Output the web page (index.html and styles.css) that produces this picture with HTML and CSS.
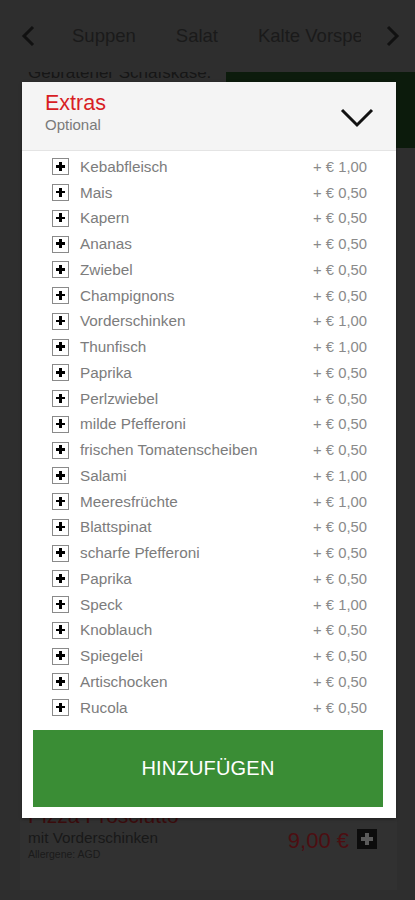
FILE: index.html
```html
<!DOCTYPE html>
<html lang="de">
<head>
<meta charset="utf-8">
<title>Extras</title>
<link rel="stylesheet" href="styles.css">
</head>
<body>
<div class="screen">
  <div class="nav">
    <svg class="arrow" width="16" height="22" viewBox="0 0 16 22"><path d="M13 2 L4 11 L13 20" fill="none" stroke="#111" stroke-width="3"/></svg>
    <div class="tabs">
      <span class="tab">Suppen</span>
      <span class="tab">Salat</span>
      <span class="tab">Kalte Vorspeisen</span>
    </div>
    <svg class="arrow arrow-r" width="16" height="22" viewBox="0 0 16 22"><path d="M3 2 L12 11 L3 20" fill="none" stroke="#111" stroke-width="3"/></svg>
  </div>
  <div class="hero">
    <div class="hero-text">Gebratener Schafskäse.</div>
    <div class="hero-img"></div>
  </div>
  <div class="spacer"></div>
  <div class="product">
    <div class="p-title">Pizza Prosciutto</div>
    <div class="p-row">
      <div class="p-info">
        <div class="p-desc">mit Vorderschinken</div>
        <div class="p-all">Allergene: AGD</div>
      </div>
      <div class="p-price">9,00 €</div>
      <svg class="p-add" width="20" height="20" viewBox="0 0 20 20"><rect width="20" height="20" fill="#0c0c0c"/><path d="M10 4 V16 M4 10 H16" stroke="#5a5a5a" stroke-width="4"/></svg>
    </div>
  </div>

  <div class="modal">
    <div class="m-head">
      <div class="m-titles">
        <div class="m-title">Extras</div>
        <div class="m-sub">Optional</div>
      </div>
      <svg class="m-chev" width="34" height="22" viewBox="0 0 34 22"><path d="M2 3 L17 18 L32 3" fill="none" stroke="#111" stroke-width="3"/></svg>
    </div>
    <div class="m-list">
      <div class="row"><span class="cb"></span><span class="name">Kebabfleisch</span><span class="price">+ € 1,00</span></div>
      <div class="row"><span class="cb"></span><span class="name">Mais</span><span class="price">+ € 0,50</span></div>
      <div class="row"><span class="cb"></span><span class="name">Kapern</span><span class="price">+ € 0,50</span></div>
      <div class="row"><span class="cb"></span><span class="name">Ananas</span><span class="price">+ € 0,50</span></div>
      <div class="row"><span class="cb"></span><span class="name">Zwiebel</span><span class="price">+ € 0,50</span></div>
      <div class="row"><span class="cb"></span><span class="name">Champignons</span><span class="price">+ € 0,50</span></div>
      <div class="row"><span class="cb"></span><span class="name">Vorderschinken</span><span class="price">+ € 1,00</span></div>
      <div class="row"><span class="cb"></span><span class="name">Thunfisch</span><span class="price">+ € 1,00</span></div>
      <div class="row"><span class="cb"></span><span class="name">Paprika</span><span class="price">+ € 0,50</span></div>
      <div class="row"><span class="cb"></span><span class="name">Perlzwiebel</span><span class="price">+ € 0,50</span></div>
      <div class="row"><span class="cb"></span><span class="name">milde Pfefferoni</span><span class="price">+ € 0,50</span></div>
      <div class="row"><span class="cb"></span><span class="name">frischen Tomatenscheiben</span><span class="price">+ € 0,50</span></div>
      <div class="row"><span class="cb"></span><span class="name">Salami</span><span class="price">+ € 1,00</span></div>
      <div class="row"><span class="cb"></span><span class="name">Meeresfrüchte</span><span class="price">+ € 1,00</span></div>
      <div class="row"><span class="cb"></span><span class="name">Blattspinat</span><span class="price">+ € 0,50</span></div>
      <div class="row"><span class="cb"></span><span class="name">scharfe Pfefferoni</span><span class="price">+ € 0,50</span></div>
      <div class="row"><span class="cb"></span><span class="name">Paprika</span><span class="price">+ € 0,50</span></div>
      <div class="row"><span class="cb"></span><span class="name">Speck</span><span class="price">+ € 1,00</span></div>
      <div class="row"><span class="cb"></span><span class="name">Knoblauch</span><span class="price">+ € 0,50</span></div>
      <div class="row"><span class="cb"></span><span class="name">Spiegelei</span><span class="price">+ € 0,50</span></div>
      <div class="row"><span class="cb"></span><span class="name">Artischocken</span><span class="price">+ € 0,50</span></div>
      <div class="row"><span class="cb"></span><span class="name">Rucola</span><span class="price">+ € 0,50</span></div>
    </div>
    <button class="m-btn">HINZUFÜGEN</button>
  </div>
</div>
</body>
</html>
```
FILE: styles.css
```css
* { box-sizing: border-box; }
html, body { margin: 0; padding: 0; }
body {
  font-family: "Liberation Sans", Arial, sans-serif;
  background: #2e2e2e;
}
.screen {
  position: relative;
  width: 415px;
  height: 900px;
  overflow: hidden;
  background: #2e2e2e;
  display: flex;
  flex-direction: column;
}
.nav {
  height: 72px;
  display: flex;
  align-items: center;
  padding-left: 20px;
  flex: 0 0 72px;
}
.arrow { flex: 0 0 16px; margin-top: -1px; }
.arrow-r { margin-left: 24px; }
.tabs {
  margin-left: 36px;
  width: 289px;
  overflow: hidden;
  white-space: nowrap;
  display: flex;
  gap: 40px;
  font-size: 18.5px;
  color: #1a1a1a;
}
.tab { flex: 0 0 auto; }
.hero {
  display: flex;
  height: 76px;
  flex: 0 0 76px;
  overflow: hidden;
}
.hero-text {
  flex: 0 0 226px;
  padding-left: 28px;
  font-size: 17px;
  line-height: 20px;
  color: #161616;
  margin-top: -9px;
}
.hero-img { flex: 1; background: #0c1b0c; }
.spacer { flex: 1; }
.product {
  margin: 0 18px 10px 20px;
  height: 100px;
  background: #313131;
  padding: 14px 20px 0 8px;
}
.p-title {
  font-size: 21px;
  line-height: 24px;
  color: #3b0c0d;
}
.p-row {
  display: flex;
  align-items: center;
  margin-top: 1px;
}
.p-info { flex: 1; }
.p-desc { font-size: 15.3px; line-height: 18px; color: #181818; }
.p-all { font-size: 10.5px; line-height: 14px; color: #1a1a1a; }
.p-price {
  font-size: 22px;
  color: #4c0e11;
  margin-right: 8px;
  margin-top: -8px;
}
.p-add { margin-top: -12px; }

.modal {
  position: absolute;
  top: 82px;
  left: 22px;
  width: 374px;
  height: 736px;
  background: #fff;
  box-shadow: 0 1px 3px rgba(0,0,0,0.4);
  display: flex;
  flex-direction: column;
}
.m-head {
  height: 69px;
  background: #f4f4f4;
  border-bottom: 1px solid #e4e4e4;
  display: flex;
  align-items: flex-start;
  justify-content: space-between;
  padding: 9px 22px 0 23px;
}
.m-title {
  font-size: 21.5px;
  line-height: 25px;
  color: #d81e25;
}
.m-sub {
  font-size: 15px;
  line-height: 17px;
  color: #7a7a7a;
  margin-top: 0;
}
.m-chev { margin-top: 16px; }
.m-list {
  padding-top: 3px;
}
.row {
  height: 25.75px;
  display: flex;
  align-items: center;
  padding: 0 29px 0 30px;
}
.cb {
  width: 17px;
  height: 17px;
  border: 1.5px solid #8a8a8a;
  flex: 0 0 17px;
  position: relative;
  margin-right: 11px;
  background: #fff;
}
.cb::before, .cb::after {
  content: "";
  position: absolute;
  background: #000;
}
.cb::before { left: 6px; top: 2.5px; width: 2.5px; height: 9px; }
.cb::after { left: 2.75px; top: 5.75px; width: 9px; height: 2.5px; }
.name {
  flex: 1;
  font-size: 15.3px;
  color: #7c7c7c;
}
.price {
  font-size: 14.8px;
  color: #8a8a8a;
}
.m-btn {
  margin: auto 13px 11px 11px;
  height: 77px;
  background: #3a8d35;
  border: 0;
  color: #fff;
  font-family: "Liberation Sans", Arial, sans-serif;
  font-size: 20px;
  letter-spacing: 0.2px;
}
```
